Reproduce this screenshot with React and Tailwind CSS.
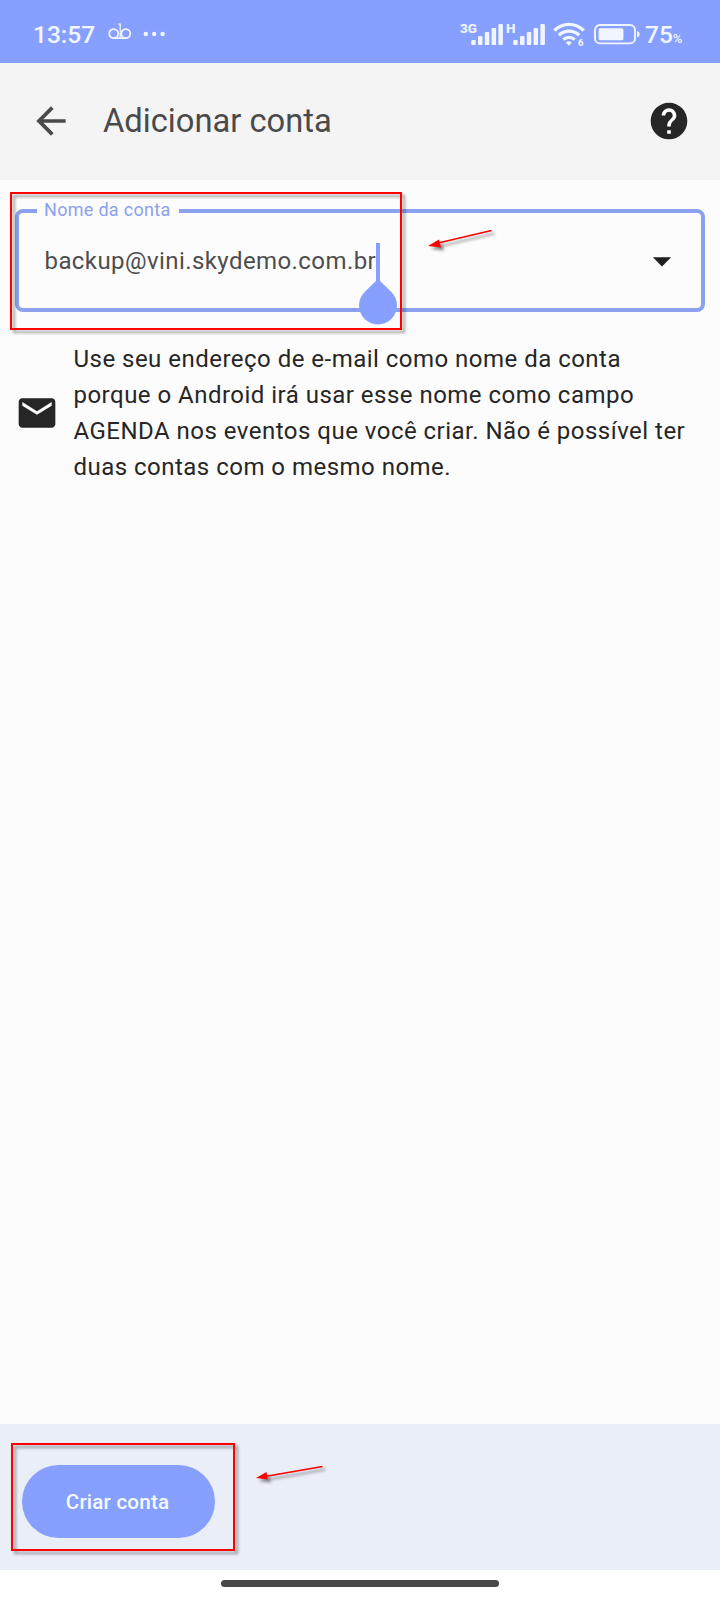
import React, { useState } from 'react';

const BARS = [5, 9, 13, 17, 21];

const SignalIcon = ({ label, className }) => (
  <div className={`relative h-[22px] ${className}`}>
    <span className="absolute left-0 -top-[2px] text-[13.5px] leading-[14px] font-extrabold">{label}</span>
    <svg className="absolute right-0 bottom-0" width="32" height="22" viewBox="0 0 32 22" fill="currentColor">
      {BARS.map((h, i) => (
        <rect key={h} x={0.2 + i * 6.8} y={22 - h} width="4.5" height={h} rx="1" />
      ))}
    </svg>
  </div>
);

const VoicemailIcon = () => (
  <svg className="mt-px" width="24" height="18" viewBox="0 0 24 18" fill="none" stroke="currentColor" strokeWidth="1.7">
    <circle cx="5.7" cy="10.6" r="4.5" />
    <circle cx="17.8" cy="10.6" r="4.5" />
    <path d="M5.7 15.1h12.1" />
    <path d="M10.2 1.2h2v13.5" strokeWidth="1.3" />
  </svg>
);

const WifiIcon = () => (
  <svg className="overflow-visible" width="32" height="24" viewBox="0 0 32 24" fill="none" stroke="currentColor" strokeWidth="3.3">
    <path d="M1.3 8.5C9.5.4 22.5.4 30.7 8.5" />
    <path d="M5.8 13.2c5.7-5.4 14.7-5.4 20.4 0" />
    <path d="M10.3 17.6c3.2-3 8.2-3 11.4 0" />
    <path d="M15.8 23.8l-3-3.4c1.7-1.6 4.3-1.6 6 0z" fill="currentColor" stroke="none" />
    <text x="25" y="23.6" fontSize="9.5" fontWeight="800" fill="currentColor" stroke="none">6</text>
  </svg>
);

const BatteryIcon = () => (
  <svg width="47" height="22" viewBox="0 0 47 22" fill="none">
    <rect x="1" y="2" width="40" height="18.4" rx="5" stroke="currentColor" strokeWidth="1.9" />
    <rect x="4.6" y="5.3" width="24.8" height="12" rx="1.5" fill="currentColor" />
    <path d="M43 8.2c3.6 0 3.6 6 0 6z" fill="currentColor" />
  </svg>
);

const StatusBar = () => (
  <div className="flex h-[63px] items-start bg-[#87a0ff] pt-[22px] pl-[33px] text-[#f1f5ff]">
    <span className="w-[75px] text-[24.5px] leading-[25px] font-medium">13:57</span>
    <VoicemailIcon />
    <svg className="ml-[10px]" width="24" height="24" viewBox="0 0 24 24" fill="currentColor">
      <circle cx="3.8" cy="12" r="2.2" />
      <circle cx="12.2" cy="12" r="2.2" />
      <circle cx="20.6" cy="12" r="2.2" />
    </svg>
    <SignalIcon label="3G" className="ml-auto mt-px w-[43px]" />
    <SignalIcon label="H" className="ml-[3px] mt-px w-[39px]" />
    <div className="ml-[8px]">
      <WifiIcon />
    </div>
    <div className="ml-[9px] mt-px">
      <BatteryIcon />
    </div>
    <div className="ml-[4px] flex w-[75px] items-baseline leading-[25px]">
      <span className="text-[24.5px] font-medium">75</span>
      <span className="text-[13px] font-medium">%</span>
    </div>
  </div>
);

const Highlight = ({ className }) => (
  <div
    className={`pointer-events-none absolute border-2 border-[#ff0000] drop-shadow-[3px_3px_1.5px_rgba(0,0,0,0.4)] ${className}`}
  />
);

const Pointer = ({ className, tail, head }) => (
  <svg
    className={`pointer-events-none absolute drop-shadow-[3px_3px_1.5px_rgba(0,0,0,0.45)] ${className}`}
    width="72"
    height="26"
    viewBox="0 0 72 26"
  >
    <path d={tail} stroke="#ff0000" strokeWidth="1.4" />
    <path d={head} fill="#ff0000" />
  </svg>
);

const App = () => {
  const [account] = useState('backup@vini.skydemo.com.br');

  return (
    <div className="flex h-[1600px] w-[720px] flex-col overflow-hidden bg-[#fcfcfc] font-['Roboto',sans-serif]">
      <StatusBar />

      <header className="flex h-[117px] items-center bg-[#f4f4f4] pr-[29.5px] pb-[1px] pl-[29px]">
        <svg width="44" height="44" viewBox="0 0 24 24" fill="#4a4a4a">
          <path d="M20 11H7.83l5.59-5.59L12 4l-8 8 8 8 1.41-1.41L7.83 13H20v-2z" />
        </svg>
        <h1 className="ml-[30px] text-[32.7px] leading-[40px] text-[#4a4a4a]">Adicionar conta</h1>
        <svg className="ml-auto" width="44" height="44" viewBox="0 0 24 24" fill="#262626">
          <circle cx="12" cy="12" r="9" fill="#fff" />
          <path d="M12 2C6.48 2 2 6.48 2 12s4.48 10 10 10 10-4.48 10-10S17.52 2 12 2zm1 17h-2v-2h2v2zm2.07-7.75l-.9.92C13.45 12.9 13 13.5 13 15h-2v-.5c0-1.1.45-2.1 1.17-2.83l1.24-1.26c.37-.36.59-.86.59-1.41 0-1.1-.9-2-2-2s-2 .9-2 2H8c0-2.21 1.79-4 4-4s4 1.79 4 4c0 .88-.36 1.68-.93 2.25z" />
        </svg>
      </header>

      <main className="relative flex-1 px-[15px] pt-[19px]">
        <fieldset className="h-[113px] rounded-[8px] border-4 border-[#8ba1ee] pr-[17.5px] pl-[18px]">
          <legend className="h-[24px] w-[142px] pl-[7px] text-[18px] leading-[21px] tracking-[0.3px] whitespace-nowrap text-[#8ba1ee]">
            Nome da conta
          </legend>
          <div className="flex h-[76px] items-center pl-[7.5px]">
            <div className="relative text-[24px] leading-[36px] tracking-[0.42px] text-[#4d4d4d]">
              {account}
              <span className="absolute top-0 left-[331.5px] h-[38px] w-[4px] bg-[#87a0ff]" />
              <svg className="absolute top-[36px] left-[313.5px]" width="40" height="48" viewBox="0 0 40 48" fill="#87a0ff">
                <path d="M20 0L33.6 13.2A19 19 0 1 1 6.4 13.2z" />
              </svg>
            </div>
            <svg className="ml-auto" width="44" height="44" viewBox="0 0 24 24" fill="#1f1f1f">
              <path d="M7 10l5 5 5-5z" />
            </svg>
          </div>
        </fieldset>

        <div className="mt-[29px] flex items-center">
          <svg className="-ml-[0.5px] shrink-0" width="44" height="44" viewBox="0 0 24 24" fill="#262626">
            <path d="M20 4H4c-1.1 0-1.99.9-1.99 2L2 18c0 1.1.9 2 2 2h16c1.1 0 2-.9 2-2V6c0-1.1-.9-2-2-2zm0 4l-8 5-8-5V6l8 5 8-5v2z" />
          </svg>
          <p className="ml-[15px] text-[24px] leading-[36px] tracking-[0.48px] whitespace-nowrap text-[#262626]">
            Use seu endereço de e-mail como nome da conta
            <br />
            porque o Android irá usar esse nome como campo
            <br />
            AGENDA nos eventos que você criar. Não é possível ter
            <br />
            duas contas com o mesmo nome.
          </p>
        </div>

        <Highlight className="top-[12px] left-[10px] h-[138px] w-[392px]" />
        <Pointer
          className="top-[46px] left-[424px]"
          tail="M12 17.5L67.5 4.5"
          head="M4 20l11-6.5 2 8z"
        />
      </main>

      <footer className="relative flex h-[146px] items-center bg-[#eaeef6] pl-[22px]">
        <button className="mt-[9px] h-[73px] w-[193px] rounded-full bg-[#87a0ff] pt-px pr-[2px] text-[20.6px] font-medium tracking-[0.2px] text-[#f4fbff]">
          Criar conta
        </button>
        <Highlight className="top-[19px] left-[11px] h-[108px] w-[224px]" />
        <Pointer
          className="top-[38px] left-[252px]"
          tail="M13 14.5L70.5 4.5"
          head="M4 16l10.5-6 1.2 7.5z"
        />
      </footer>

      {/* gesture navigation */}
      <div className="flex h-[30px] justify-center bg-white pt-[10px]">
        <div className="h-[7px] w-[278px] rounded-full bg-[#484848]" />
      </div>
    </div>
  );
};

export default App;
